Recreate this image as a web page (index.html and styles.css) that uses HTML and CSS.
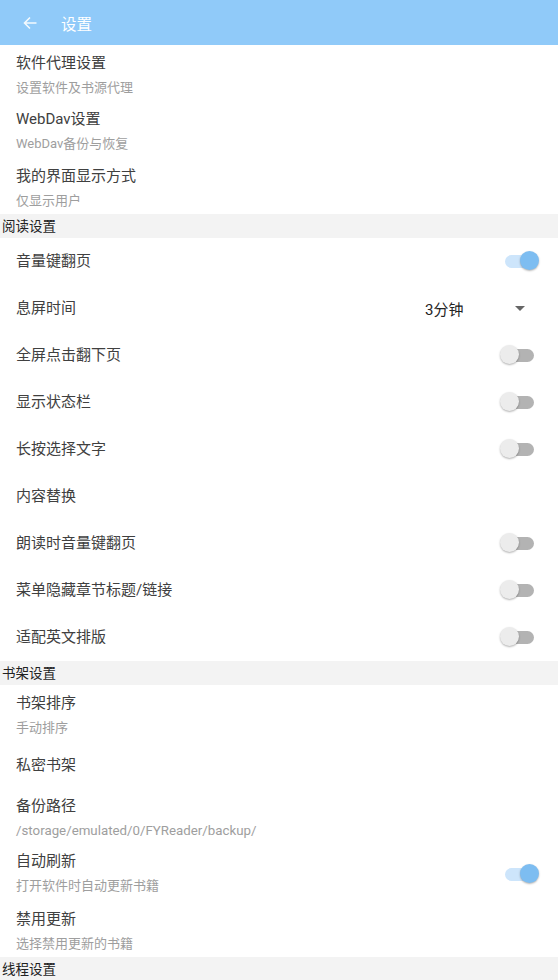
FILE: index.html
```html
<!DOCTYPE html>
<html lang="zh-CN">
<head>
<meta charset="utf-8">
<link rel="stylesheet" href="styles.css">
</head>
<body>
<header class="appbar">
  <svg class="back" width="14" height="14" viewBox="0 0 14 14"><path d="M13.5 7H1.5M7 1.5L1.5 7 7 12.5" fill="none" stroke="#fff" stroke-width="1.6"/></svg>
  <span class="appbar-title">设置</span>
</header>
<main>
  <div class="item two"><div class="t">软件代理设置</div><div class="s">设置软件及书源代理</div></div>
  <div class="item two"><div class="t">WebDav设置</div><div class="s">WebDav备份与恢复</div></div>
  <div class="item two"><div class="t">我的界面显示方式</div><div class="s">仅显示用户</div></div>
  <div class="section">阅读设置</div>
  <div class="row"><span class="t">音量键翻页</span><span class="switch on"><span class="track"></span><span class="thumb"></span></span></div>
  <div class="row"><span class="t">息屏时间</span><span class="dropdown"><span class="val">3分钟</span><span class="caret"></span></span></div>
  <div class="row"><span class="t">全屏点击翻下页</span><span class="switch"><span class="track"></span><span class="thumb"></span></span></div>
  <div class="row"><span class="t">显示状态栏</span><span class="switch"><span class="track"></span><span class="thumb"></span></span></div>
  <div class="row"><span class="t">长按选择文字</span><span class="switch"><span class="track"></span><span class="thumb"></span></span></div>
  <div class="row"><span class="t">内容替换</span></div>
  <div class="row"><span class="t">朗读时音量键翻页</span><span class="switch"><span class="track"></span><span class="thumb"></span></span></div>
  <div class="row"><span class="t">菜单隐藏章节标题/链接</span><span class="switch"><span class="track"></span><span class="thumb"></span></span></div>
  <div class="row"><span class="t">适配英文排版</span><span class="switch"><span class="track"></span><span class="thumb"></span></span></div>
  <div class="section">书架设置</div>
  <div class="item two"><div class="t">书架排序</div><div class="s">手动排序</div></div>
  <div class="row"><span class="t">私密书架</span></div>
  <div class="item two"><div class="t">备份路径</div><div class="s path">/storage/emulated/0/FYReader/backup/</div></div>
  <div class="item two withswitch"><div class="txt"><div class="t">自动刷新</div><div class="s">打开软件时自动更新书籍</div></div><span class="switch on"><span class="track"></span><span class="thumb"></span></span></div>
  <div class="item two"><div class="t">禁用更新</div><div class="s">选择禁用更新的书籍</div></div>
  <div class="section">线程设置</div>
</main>
</body>
</html>
```
FILE: styles.css
```css
* { box-sizing: border-box; }
html, body { margin: 0; padding: 0; background: #fff; }
body {
  width: 558px;
  height: 980px;
  overflow: hidden;
  font-family: Roboto, "Noto Sans CJK SC", sans-serif;
}
.appbar {
  height: 45px;
  background: #90caf9;
  display: flex;
  align-items: center;
  padding-left: 23px;
}
.back { opacity: 0.9; margin-top: 1px; }
.appbar-title {
  color: #fff;
  font-size: 15.5px;
  margin-left: 24px;
}
.item {
  height: 56.33px;
  padding: 8px 16px 0;
}
.t {
  font-size: 15px;
  line-height: 20px;
  color: #404040;
}
.s {
  font-size: 13px;
  line-height: 20px;
  margin-top: 5px;
  color: #9e9e9e;
}
.s.path { font-size: 13.3px; }
.withswitch {
  display: flex;
  justify-content: space-between;
  align-items: center;
  padding-top: 2px;
  padding-right: 18px;
}
.section {
  height: 24px;
  line-height: 24px;
  background: #f3f3f3;
  font-size: 13.5px;
  color: #222;
  padding-left: 2px;
}
.row {
  height: 47px;
  display: flex;
  align-items: center;
  justify-content: space-between;
  padding: 0 18px 0 16px;
}
.switch {
  position: relative;
  width: 40px;
  height: 22px;
  display: inline-block;
}
.track {
  position: absolute;
  left: 5px;
  top: 5px;
  width: 29px;
  height: 13px;
  border-radius: 7px;
  background: #b3b3b3;
}
.thumb {
  position: absolute;
  left: 0;
  top: 1px;
  width: 19px;
  height: 19px;
  border-radius: 50%;
  background: #ececec;
  box-shadow: 0 1px 2px rgba(0,0,0,0.3);
}
.switch.on .track { background: #cde5fb; }
.switch.on .thumb {
  left: 20px;
  background: #7dbdf1;
}
.dropdown {
  display: flex;
  align-items: center;
  width: 115px;
}
.val {
  font-size: 15px;
  color: #222;
  flex: 1;
}
.caret {
  width: 0;
  height: 0;
  border-left: 5px solid transparent;
  border-right: 5px solid transparent;
  border-top: 5px solid #666;
  margin-right: 15px;
}
```
